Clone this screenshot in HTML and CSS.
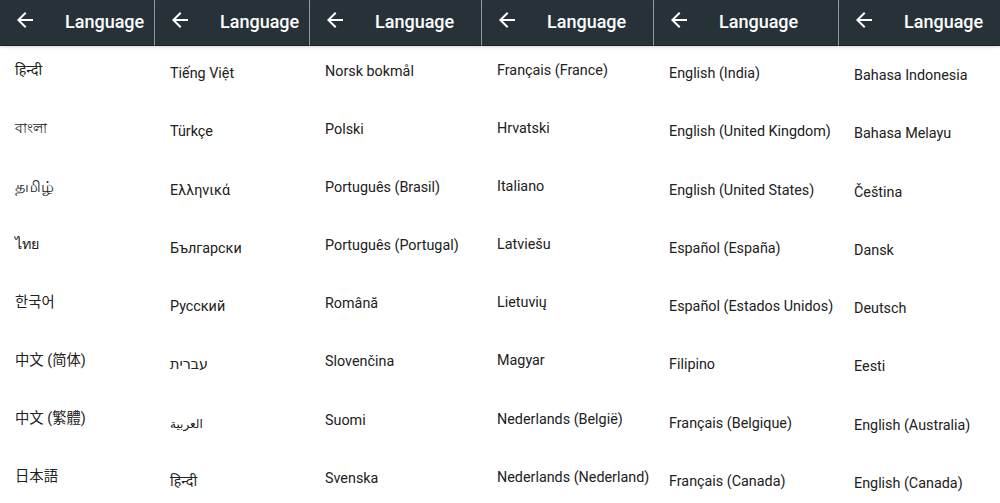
FILE: index.html
```html
<!DOCTYPE html>
<html lang="en">
<head>
<meta charset="utf-8">
<title>Language</title>
<link rel="stylesheet" href="styles.css">
</head>
<body>
<div class="screens">
  <section class="screen w155 off1">
    <header class="bar"><svg class="back" viewBox="0 0 24 24"><path d="M20 11H7.83l5.59-5.59L12 4l-8 8 8 8 1.41-1.41L7.83 13H20v-2z"/></svg><span class="title">Language</span></header>
    <ul class="list">
      <li>हिन्दी</li><li>বাংলা</li><li class="ta">தமிழ்</li><li>ไทย</li><li class="kr">한국어</li><li class="sc">中文 (简体)</li><li class="tc">中文 (繁體)</li><li class="jp">日本語</li>
    </ul>
  </section>
  <section class="screen w155 off2">
    <header class="bar"><svg class="back" viewBox="0 0 24 24"><path d="M20 11H7.83l5.59-5.59L12 4l-8 8 8 8 1.41-1.41L7.83 13H20v-2z"/></svg><span class="title">Language</span></header>
    <ul class="list">
      <li>Tiếng Việt</li><li>Türkçe</li><li>Ελληνικά</li><li>Български</li><li>Русский</li><li>עברית</li><li class="ar">العربية</li><li>हिन्दी</li>
    </ul>
  </section>
  <section class="screen w172 off3">
    <header class="bar"><svg class="back" viewBox="0 0 24 24"><path d="M20 11H7.83l5.59-5.59L12 4l-8 8 8 8 1.41-1.41L7.83 13H20v-2z"/></svg><span class="title">Language</span></header>
    <ul class="list">
      <li>Norsk bokmål</li><li>Polski</li><li>Português (Brasil)</li><li>Português (Portugal)</li><li>Română</li><li>Slovenčina</li><li>Suomi</li><li>Svenska</li>
    </ul>
  </section>
  <section class="screen w172 off4">
    <header class="bar"><svg class="back" viewBox="0 0 24 24"><path d="M20 11H7.83l5.59-5.59L12 4l-8 8 8 8 1.41-1.41L7.83 13H20v-2z"/></svg><span class="title">Language</span></header>
    <ul class="list">
      <li>Français (France)</li><li>Hrvatski</li><li>Italiano</li><li>Latviešu</li><li>Lietuvių</li><li>Magyar</li><li>Nederlands (België)</li><li>Nederlands (Nederland)</li>
    </ul>
  </section>
  <section class="screen w185 off5">
    <header class="bar"><svg class="back" viewBox="0 0 24 24"><path d="M20 11H7.83l5.59-5.59L12 4l-8 8 8 8 1.41-1.41L7.83 13H20v-2z"/></svg><span class="title">Language</span></header>
    <ul class="list">
      <li>English (India)</li><li>English (United Kingdom)</li><li>English (United States)</li><li>Español (España)</li><li>Español (Estados Unidos)</li><li>Filipino</li><li>Français (Belgique)</li><li>Français (Canada)</li>
    </ul>
  </section>
  <section class="screen w161 off6 last">
    <header class="bar"><svg class="back" viewBox="0 0 24 24"><path d="M20 11H7.83l5.59-5.59L12 4l-8 8 8 8 1.41-1.41L7.83 13H20v-2z"/></svg><span class="title">Language</span></header>
    <ul class="list">
      <li>Bahasa Indonesia</li><li>Bahasa Melayu</li><li>Čeština</li><li>Dansk</li><li>Deutsch</li><li>Eesti</li><li>English (Australia)</li><li>English (Canada)</li>
    </ul>
  </section>
</div>
</body>
</html>
```

FILE: styles.css
```css
html, body {
  margin: 0;
  padding: 0;
  background: #ffffff;
}
body {
  width: 1000px;
  height: 503px;
  overflow: hidden;
  font-family: Roboto, "Noto Sans", "DejaVu Sans", "Noto Sans CJK SC", sans-serif;
  color: #212121;
}
.screens {
  display: flex;
  align-items: flex-start;
}
.screen {
  flex: none;
  display: flex;
  flex-direction: column;
}
.w155 { width: 155px; }
.w172 { width: 172px; }
.w185 { width: 185px; }
.w161 { width: 161px; }

.bar {
  position: relative;
  z-index: 1;
  height: 44px;
  box-sizing: content-box;
  display: flex;
  align-items: center;
  padding-bottom: 1px;
  background: #263238;
  border-bottom: 1px solid #1b2327;
  border-right: 1px solid #9ea4a8;
  box-shadow: 0 1px 3px rgba(0, 0, 0, 0.18);
}
.screen.last .bar { border-right: none; }
.back {
  flex: none;
  width: 24px;
  height: 24px;
  margin-left: 13px;
  margin-top: -4px;
  fill: #ffffff;
}
.title {
  margin-left: 28px;
  margin-top: -2px;
  font-size: 18px;
  font-weight: 500;
  color: #ffffff;
}
.list {
  list-style: none;
  margin: 0;
  padding: 0 0 0 15px;
  display: flex;
  flex-direction: column;
  font-size: 14.35px;
  line-height: 20px;
}
.list li {
  height: 20px;
  white-space: nowrap;
}
.off1 .list { padding-top: 15px; gap: 38px; }
.off2 .list { padding-top: 18px; gap: 38.3px; }
.off3 .list { padding-top: 16px; gap: 38.1px; }
.off4 .list { padding-top: 15px; gap: 38.1px; }
.off5 .list { padding-top: 18px; gap: 38.3px; }
.off6 .list { padding-top: 20px; gap: 38.3px; }

.sc { font-family: Roboto, "Noto Sans CJK SC", sans-serif; }
.tc { font-family: Roboto, "Noto Sans CJK TC", sans-serif; }
.jp { font-family: Roboto, "Noto Sans CJK JP", sans-serif; }
.kr { font-family: Roboto, "Noto Sans CJK KR", sans-serif; }
.ta { font-size: 15.5px; }
.ar { font-size: 12px; }
```
